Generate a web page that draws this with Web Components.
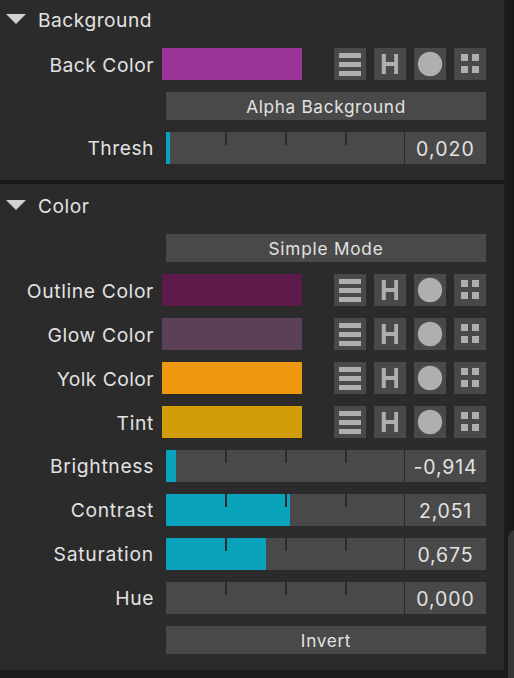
<!DOCTYPE html>
<html lang="en">
<head>
<meta charset="utf-8">
<title>Inspector</title>
<style>
html,body{margin:0;height:100%;overflow:hidden;background:#1a1a1a}
body{font-family:Inter,"Liberation Sans",sans-serif;color:#e2e2e2}
</style>
</head>
<body>
<inspector-panel>
  <panel-section heading="Background" style="--top:-2px">
    <color-row label="Back Color" color="#993598" style="--ls:.5px"></color-row>
    <button-row>Alpha Background</button-row>
    <slider-row label="Thresh" value="0,020" fill="4" style="--ls:.5px;--vls:1.1px"></slider-row>
  </panel-section>
  <panel-section heading="Color">
    <button-row style="--ls:.8px">Simple Mode</button-row>
    <color-row label="Outline Color" color="#5e1a4b" style="--ls:.63px"></color-row>
    <color-row label="Glow Color" color="#5b3f56" style="--ls:.58px"></color-row>
    <color-row label="Yolk Color" color="#ee980f" style="--ls:.43px"></color-row>
    <color-row label="Tint" color="#d39d0a" style="--ls:.65px"></color-row>
    <slider-row label="Brightness" value="-0,914" fill="10" style="--ls:.66px;--vls:.85px"></slider-row>
    <slider-row label="Contrast" value="2,051" fill="124" style="--ls:.68px;--vls:.8px"></slider-row>
    <slider-row label="Saturation" value="0,675" fill="100" style="--ls:.75px"></slider-row>
    <slider-row label="Hue" value="0,000" fill="0" style="--ls:.6px"></slider-row>
    <button-row>Invert</button-row>
  </panel-section>
</inspector-panel>
<script>
const define = (name, render) => customElements.define(name, class extends HTMLElement {
  connectedCallback() {
    if (this.shadowRoot) return;
    this.attachShadow({ mode: 'open' }).innerHTML = render(this);
  }
});

define('inspector-panel', () => `
<style>
:host{display:grid;grid-template-columns:504px 10px;height:678px;overflow:hidden}
.main{display:flex;flex-direction:column;gap:4px}
.gutter{background:linear-gradient(90deg,#1d1d1d,#161616);display:flex;align-items:flex-end;overflow:hidden}
.thumb{flex:none;width:16px;height:160px;margin:0 0 -12px 4px;border-radius:8px;background:#363636}
</style>
<div class="main"><slot></slot></div><div class="gutter"><div class="thumb"></div></div>`);

define('panel-section', el => `
<style>
:host{display:block;background:#2b2b2b;padding-bottom:16px;overflow:hidden}
header{display:flex;align-items:center;height:50px;box-sizing:border-box;padding:0 0 8px 6px;margin-top:var(--top,0);gap:12px;font-size:19.2px;letter-spacing:.5px}
svg{display:block}
h2{font:inherit;margin:2px 0 0;line-height:24px}
.rows{display:flex;flex-direction:column;gap:12px}
</style>
<header><svg width="20" height="10"><path d="M0 0H20L10 10Z" fill="#d2d2d2"/></svg><h2>${el.getAttribute('heading')}</h2></header>
<div class="rows"><slot></slot></div>`);

define('row-label', () => `
<style>:host{display:block;width:154px;text-align:right;font-size:19.3px;line-height:var(--lh,32px);letter-spacing:var(--ls,.5px);white-space:nowrap}</style><slot></slot>`);

const ICONS = {
  sliders: '<path d="M5 5h22v5H5zM5 14h22v5H5zM5 23h22v5H5z"/>',
  hue: '<path d="M7.8 6h4v8h8.4V6H24v20h-3.8v-8h-8.4v8h-4z"/>',
  wheel: '<circle cx="16" cy="16" r="12.2"/>',
  palette: '<path d="M7 6h7v7H7zM18 6h7v7h-7zM7 18h7v7H7zM18 18h7v7h-7z"/>'
};
define('mode-icon', el => `
<style>:host{display:block;width:32px;height:32px;background:#494949}svg{display:block;fill:#afafaf}</style>
<svg width="32" height="32">${ICONS[el.getAttribute('kind')]}</svg>`);

define('color-row', el => `
<style>
:host{display:flex;height:32px;--lh:34px}
.swatch{width:140px;margin-left:8px;background:${el.getAttribute('color')}}
.icons{display:flex;gap:8px;margin-left:32px}
</style>
<row-label>${el.getAttribute('label')}</row-label><div class="swatch"></div>
<div class="icons">${Object.keys(ICONS).map(k => `<mode-icon kind="${k}"></mode-icon>`).join('')}</div>`);

define('button-row', () => `
<style>
:host{display:block;margin:0 18px 0 166px;height:28px;background:#494949;text-align:center;font-size:17.2px;line-height:29px;letter-spacing:var(--ls,.68px)}
</style><slot></slot>`);

define('slider-row', el => `
<style>
:host{display:flex;height:32px}
.track{width:238px;margin-left:12px;
background:
linear-gradient(#2b2b2b,#2b2b2b) 59px 0/2px 13px no-repeat,
linear-gradient(#2b2b2b,#2b2b2b) 119px 0/2px 13px no-repeat,
linear-gradient(#2b2b2b,#2b2b2b) 179px 0/2px 13px no-repeat,
linear-gradient(#08a3ba,#08a3ba) 0 0/${el.getAttribute('fill')}px 32px no-repeat,#494949}
.value{width:81px;margin-left:1px;background:#494949;text-align:center;font-size:19.5px;line-height:34px;letter-spacing:var(--vls,.9px)}
</style>
<row-label>${el.getAttribute('label')}</row-label><div class="track"></div><div class="value">${el.getAttribute('value')}</div>`);
</script>
</body>
</html>
